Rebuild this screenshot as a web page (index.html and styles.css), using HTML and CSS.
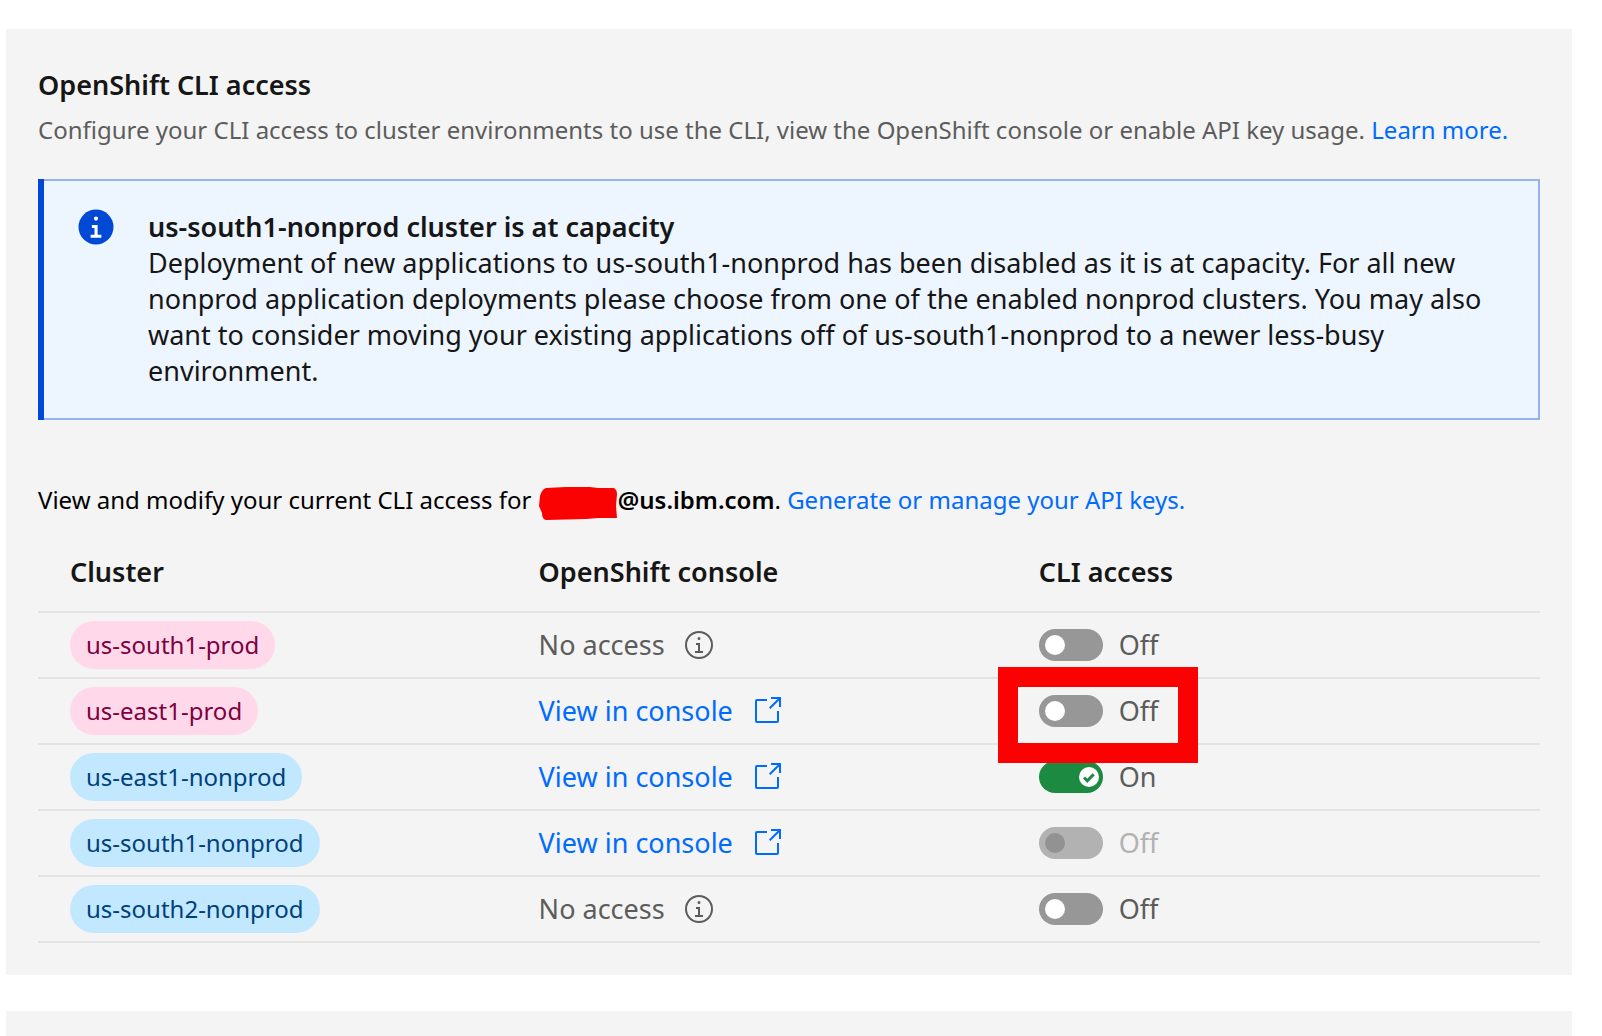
FILE: index.html
```html
<!DOCTYPE html>
<html lang="en">
<head>
  <meta charset="utf-8">
  <title>OpenShift CLI access</title>
  <link rel="stylesheet" href="styles.css">
</head>
<body>
  <svg class="sprite" aria-hidden="true">
    <symbol id="info" viewBox="0 0 32 32">
      <path d="M17 22V14H13v2h2v6H12v2h8V22ZM16 8a1.5 1.5 0 1 0 1.5 1.5A1.5 1.5 0 0 0 16 8Z"/>
      <path d="M16 30A14 14 0 1 1 30 16 14 14 0 0 1 16 30ZM16 4A12 12 0 1 0 28 16 12 12 0 0 0 16 4Z"/>
    </symbol>
    <symbol id="launch" viewBox="0 0 32 32">
      <path d="M26 28H6a2 2 0 0 1-2-2V6A2 2 0 0 1 6 4H16V6H6V26H26V16h2V26A2 2 0 0 1 26 28Z"/>
      <path d="M20 2V4H26.586L18 12.586 19.414 14 28 5.414V12H30V2Z"/>
    </symbol>
  </svg>

  <main class="panel">
    <h1 class="title">OpenShift CLI access</h1>
    <p class="description">Configure your CLI access to cluster environments to use the CLI, view the OpenShift console or enable API key usage. <a class="link" href="#learn">Learn more.</a></p>

    <section class="notice">
      <svg class="notice-icon" viewBox="0 0 32 32" aria-hidden="true">
        <circle cx="16" cy="16" r="14" fill="#0049d6"/>
        <path fill="#fff" d="M16 7.5a1.7 1.7 0 1 1-1.7 1.7A1.7 1.7 0 0 1 16 7.5ZM20.3 24.5H11.7v-2.3h3.1v-5.4H12.7v-2.4h4.6v7.8h3Z"/>
      </svg>
      <div class="notice-text">
        <h2 class="notice-title">us-south1-nonprod cluster is at capacity</h2>
        <p class="notice-body">Deployment of new applications to us-south1-nonprod has been disabled as it is at capacity. For all new nonprod application deployments please choose from one of the enabled nonprod clusters. You may also want to consider moving your existing applications off of us-south1-nonprod to a newer less-busy environment.</p>
      </div>
    </section>

    <p class="account">View and modify your current CLI access for <svg class="redaction" viewBox="0 0 80 34" aria-hidden="true"><path fill="#fa0202" d="M8 2 28 1H52L60 2H76Q79 4 79 8L78 20 79 32H60L48 33 8 34Q4 33 4 27L1 20 2 10Q4 3 8 2Z"/></svg><strong class="domain">@us.ibm.com</strong>. <a class="link" href="#keys">Generate or manage your API keys.</a></p>

    <table class="clusters">
      <thead>
        <tr><th class="col-cluster">Cluster</th><th class="col-console">OpenShift console</th><th>CLI access</th></tr>
      </thead>
      <tbody>
        <tr>
          <td><span class="tag tag-prod">us-south1-prod</span></td>
          <td><span class="console">No access <svg class="icon"><use href="#info"/></svg></span></td>
          <td><label class="toggle"><input class="switch" type="checkbox"><span>Off</span></label></td>
        </tr>
        <tr>
          <td><span class="tag tag-prod">us-east1-prod</span></td>
          <td><a class="console link" href="#us-east1-prod">View in console <svg class="icon"><use href="#launch"/></svg></a></td>
          <td><label class="toggle"><input class="switch" type="checkbox"><span>Off</span><span class="highlight"></span></label></td>
        </tr>
        <tr>
          <td><span class="tag tag-nonprod">us-east1-nonprod</span></td>
          <td><a class="console link" href="#us-east1-nonprod">View in console <svg class="icon"><use href="#launch"/></svg></a></td>
          <td><label class="toggle"><input class="switch" type="checkbox" checked><svg class="check" viewBox="0 0 20 20" aria-hidden="true"><path d="M5 10.5 8.3 13.8 14.7 7.3"/></svg><span>On</span></label></td>
        </tr>
        <tr>
          <td><span class="tag tag-nonprod">us-south1-nonprod</span></td>
          <td><a class="console link" href="#us-south1-nonprod">View in console <svg class="icon"><use href="#launch"/></svg></a></td>
          <td><label class="toggle toggle-disabled"><input class="switch" type="checkbox" disabled><span>Off</span></label></td>
        </tr>
        <tr>
          <td><span class="tag tag-nonprod">us-south2-nonprod</span></td>
          <td><span class="console">No access <svg class="icon"><use href="#info"/></svg></span></td>
          <td><label class="toggle"><input class="switch" type="checkbox"><span>Off</span></label></td>
        </tr>
      </tbody>
    </table>
  </main>

  <section class="panel-next"></section>
</body>
</html>
```
FILE: styles.css
```css
* {
  box-sizing: border-box;
}

body {
  display: flex;
  flex-direction: column;
  gap: 36px;
  min-height: 100vh;
  margin: 0;
  padding: 29px 30px 0 6px;
  background: #fff;
  color: #161616;
  font-family: "Noto Sans", sans-serif;
  font-size: 27px;
  line-height: 36px;
}

h1,
h2,
p {
  margin: 0;
}

.sprite {
  position: absolute;
  width: 0;
  height: 0;
}

.panel {
  padding: 38px 32px 32px;
  background: #f4f4f4;
}

.panel-next {
  flex: 1;
  background: #f4f4f4;
}

.title,
.notice-title {
  font-size: 27px;
  font-weight: 600;
  line-height: 36px;
}

.description {
  margin-top: 10px;
  color: #5c5c5c;
  font-size: 24px;
  line-height: 34px;
}

.link {
  color: #006bff;
  text-decoration: none;
}

.notice {
  display: flex;
  align-items: flex-start;
  gap: 32px;
  margin-top: 32px;
  padding: 28px 32px 31px;
  border-left: 6px solid #0049d6;
  background: #edf5ff;
  box-shadow: inset -2px 0 #97b3ee, inset 0 2px #97b3ee, inset 0 -2px #97b3ee;
}

.notice-icon {
  flex: none;
  width: 40px;
  height: 40px;
}

.notice-text {
  padding-top: 2px;
}

.account {
  margin-top: 64px;
  color: #000;
  font-size: 24px;
  line-height: 32px;
}

.redaction {
  width: 80px;
  height: 34px;
  margin: -4px 0;
  vertical-align: middle;
}

.domain {
  font-weight: 600;
}

.clusters {
  width: 100%;
  margin-top: 24px;
  border-collapse: separate;
  border-spacing: 0;
  table-layout: fixed;
}

.col-cluster {
  width: 31.2%;
}

.col-console {
  width: 33.3%;
}

.clusters th {
  padding: 14px 0 21px 32px;
  border-bottom: 2px solid #e3e3e3;
  font-weight: 600;
  text-align: left;
}

.clusters td {
  height: 66px;
  padding: 0 0 0 32px;
  border-bottom: 2px solid #e3e3e3;
  color: #5c5c5c;
  vertical-align: middle;
}

.tag {
  display: block;
  width: fit-content;
  padding: 0 16px;
  border-radius: 24px;
  font-size: 24px;
  line-height: 48px;
}

.tag-prod {
  background: #ffd9ea;
  color: #7d0040;
}

.tag-nonprod {
  background: #c2e8ff;
  color: #00417a;
}

.console {
  display: flex;
  align-items: center;
  gap: 18px;
  width: fit-content;
}

.icon {
  width: 32px;
  height: 32px;
  fill: currentColor;
}

.clusters .link {
  color: #006bff;
}

.toggle {
  position: relative;
  display: flex;
  align-items: center;
  gap: 16px;
  width: fit-content;
}

.toggle-disabled {
  color: #b2b2b2;
}

.switch {
  display: flex;
  align-items: center;
  width: 64px;
  height: 32px;
  margin: 0;
  padding: 0 4px 0 6px;
  border-radius: 16px;
  background: #979797;
  appearance: none;
}

.switch::before {
  width: 20px;
  height: 20px;
  border-radius: 50%;
  background: #fff;
  content: "";
}

.switch:checked {
  justify-content: flex-end;
  background: #1c8a40;
}

.switch:disabled {
  background: #b2b2b2;
}

.switch:disabled::before {
  background: #929292;
}

.check {
  position: absolute;
  top: 8px;
  left: 40px;
  width: 20px;
  height: 20px;
  fill: none;
  stroke: #1c8a40;
  stroke-width: 3;
}

/* Callout drawn around the switch to change */
.highlight {
  position: absolute;
  top: -26px;
  left: -41px;
  width: 200px;
  height: 96px;
  border: 20px solid #fa0202;
  z-index: 1;
}
```
